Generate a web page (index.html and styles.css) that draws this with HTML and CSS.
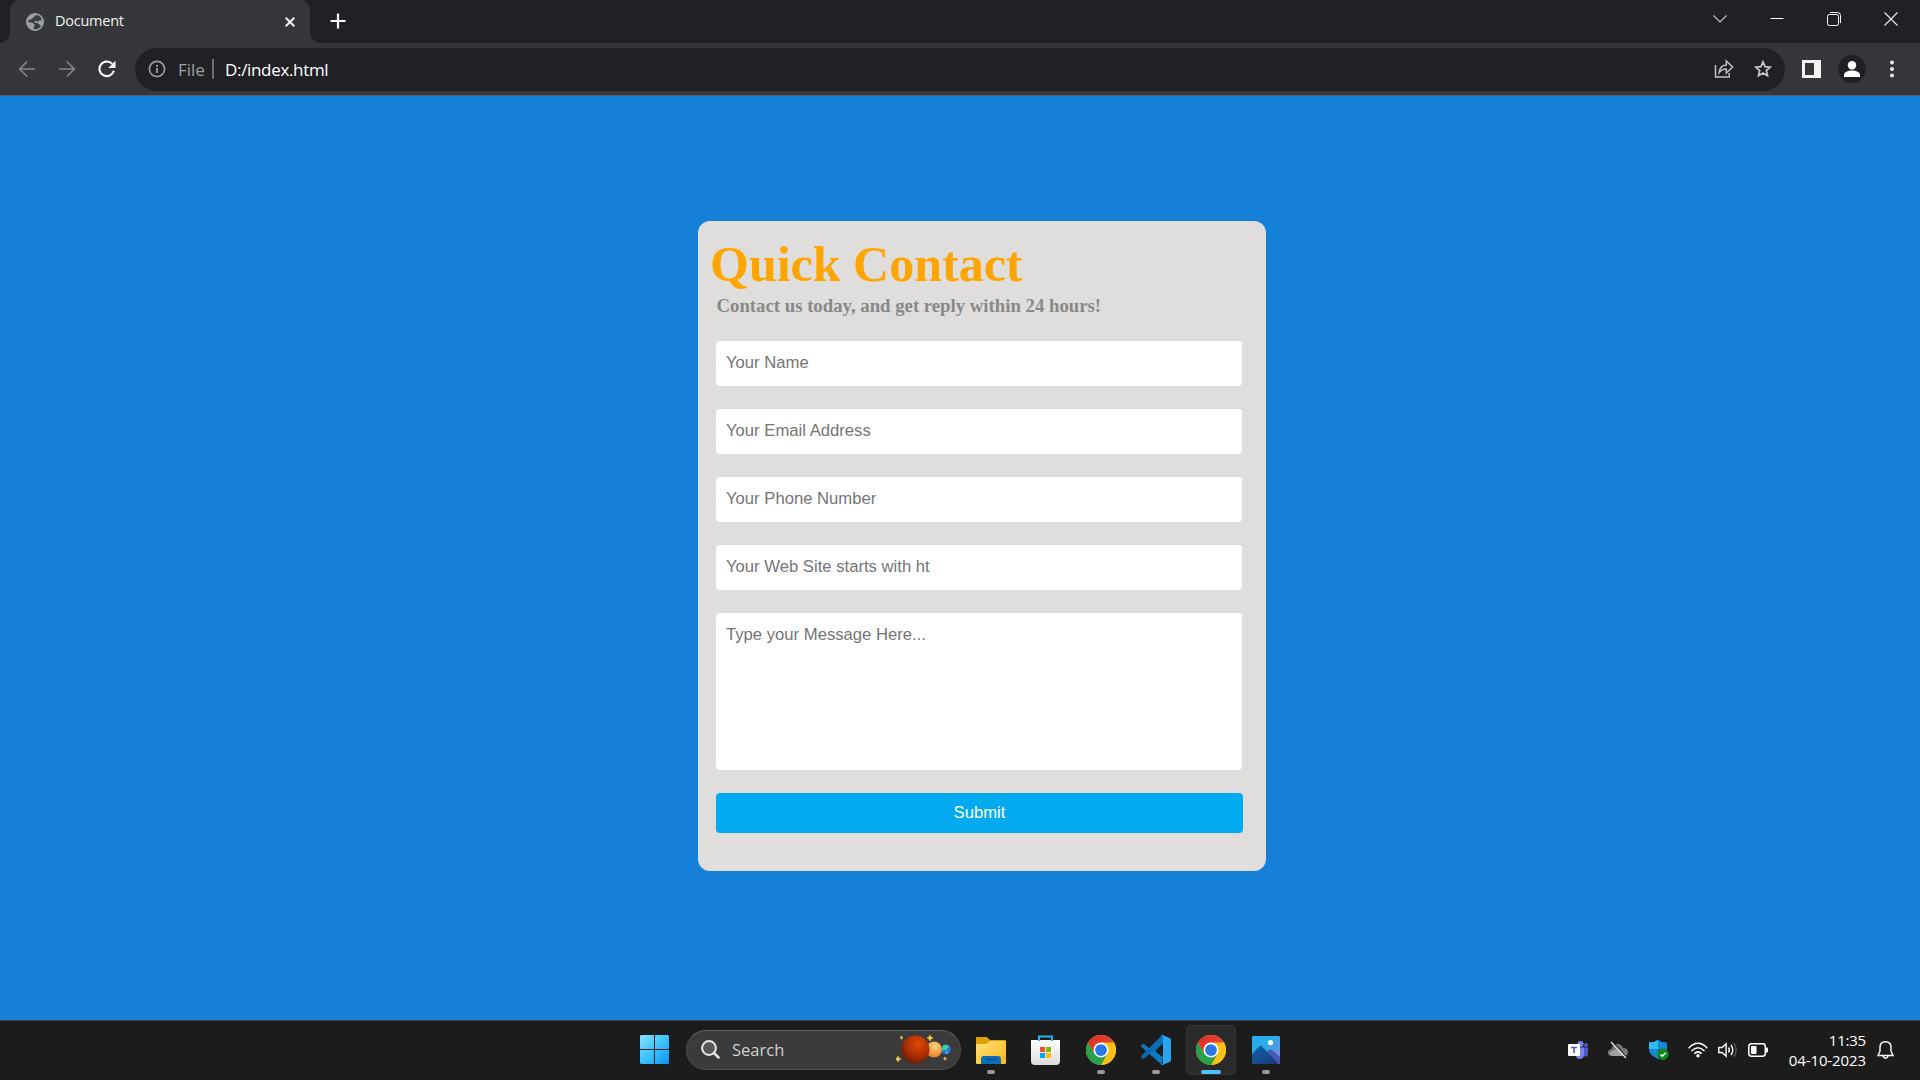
FILE: index.html
```html
<!DOCTYPE html>
<html lang="en">
<head>
<meta charset="utf-8">
<title>Document</title>
<link rel="stylesheet" href="styles.css">
</head>
<body>
<svg class="defs" width="0" height="0" aria-hidden="true">
  <defs>
    <linearGradient id="red" x1="0" y1="0" x2="1" y2="0"><stop offset="0" stop-color="#d93025"/><stop offset="1" stop-color="#ea4335"/></linearGradient>
    <linearGradient id="win" x1="0" y1="0" x2="1" y2="1"><stop offset="0" stop-color="#86e2ff"/><stop offset=".5" stop-color="#3ec3fb"/><stop offset="1" stop-color="#0a93f5"/></linearGradient>
    <linearGradient id="folder" x1="0" y1="0" x2="1" y2="1"><stop offset="0" stop-color="#ffe07c"/><stop offset="1" stop-color="#fbb917"/></linearGradient>
    <linearGradient id="bag" x1="0" y1="0" x2="0" y2="1"><stop offset="0" stop-color="#fff"/><stop offset="1" stop-color="#dcdcdc"/></linearGradient>
    <linearGradient id="photo" x1="0" y1="0" x2="1" y2="1"><stop offset=".4" stop-color="#28aeea"/><stop offset="1" stop-color="#8a7fe0"/></linearGradient>
    <linearGradient id="hill" x1="0" y1="0" x2="1" y2="1"><stop offset="0" stop-color="#1263ac"/><stop offset="1" stop-color="#173a78"/></linearGradient>
    <radialGradient id="mars" cx=".6" cy=".3" r=".75"><stop offset="0" stop-color="#e04a05"/><stop offset=".6" stop-color="#a92d04"/><stop offset="1" stop-color="#691b04"/></radialGradient>
    <radialGradient id="venus" cx=".55" cy=".3" r=".75"><stop offset="0" stop-color="#ffd37c"/><stop offset="1" stop-color="#e87722"/></radialGradient>
    <symbol id="chrome" viewBox="0 0 48 48">
      <circle cx="24" cy="24" r="24" fill="#fbc116"/>
      <path d="M24 24 3.2 12A24 24 0 0 1 44.8 12Z" fill="url(#red)"/>
      <path d="M24 12H44.8A24 24 0 0 1 24 48L34.4 30Z" fill="#fbc116"/>
      <path d="M13.6 30 3.2 12A24 24 0 0 0 24 48L34.4 30 24 24Z" fill="#28a04c"/>
      <path d="M3.2 12 13.6 30 24 24V12Z" fill="url(#red)"/>
      <circle cx="24" cy="24" r="12" fill="#fff"/><circle cx="24" cy="24" r="9.4" fill="#2a78e4"/>
    </symbol>
  </defs>
</svg>

<div class="tabstrip">
  <div class="tab">
    <svg class="globe" width="18" height="18" viewBox="0 0 18 18"><circle cx="9" cy="9" r="9" fill="#9aa0a6"/><path d="M10.5 2c-1.6.2-1.6 1.8-3 2.2-.9.3-.6 1.2-1.2 1.6-.9.5-2.8.3-4.2 2.2-.5.6.8 1.7 2.3 1.5 1.6-.2 2.2 0 2.8 1 .5.8 1.8.6 1.8 1.5 0 1-1.4 1-1.3 2.1 0 .7-.1 1.5.2 2 3 .7 5.600-.6 7-2.900-.8-.8-.9-1.900-2-2-.9-.1-1.200-1.300-2.200-1.500-1.100-.3-2.200.1-2.400-.8-.2-.8 1-1.100 1.700-1.200 1-.1.8 1 1.700 1 .9 0 .8-1.200 1.700-1.300.8-.2 1.300.2 2.200-.1C15.700 4.800 13.600 2.300 10.500 2Z" fill="#3a3b3f"/></svg>
    <span class="tab-title">Document</span>
    <svg width="10" height="10" viewBox="0 0 10 10" fill="none" stroke="#f1f3f4" stroke-width="2"><path d="m.7.7 8.600 8.600M9.300.7.700 9.300"/></svg>
  </div>
  <svg class="new-tab" width="16" height="16" viewBox="0 0 16 16" fill="none" stroke="#fff" stroke-width="2.200"><path d="M8 .5v15M.5 8h15"/></svg>
  <div class="window-buttons">
    <svg width="14" height="14" viewBox="0 0 14 14" fill="none" stroke="#c8c9ca" stroke-width="1.100"><path d="m.5 3.500 6.500 6.500 6.500-6.500"/></svg>
    <svg width="14" height="14" viewBox="0 0 14 14" fill="none" stroke="#fff"><path d="M.5 6.500h13"/></svg>
    <svg width="14" height="14" viewBox="0 0 14 14" fill="none" stroke="#fff"><rect x=".5" y="2.500" width="11" height="11" rx="2"/><path d="M3 .5h7.500a3 3 0 0 1 3 3V11"/></svg>
    <svg width="14" height="14" viewBox="0 0 14 14" fill="none" stroke="#e8e8e8" stroke-width="1.200"><path d="m.5.5 13 13m0-13-13 13"/></svg>
  </div>
</div>

<div class="toolbar">
  <div class="nav">
    <svg width="18" height="18" viewBox="0 0 18 18" fill="none" stroke="#85868a" stroke-width="1.700"><path d="M17 9H2M9.200 1.500 1.700 9l7.500 7.500"/></svg>
    <svg width="18" height="18" viewBox="0 0 18 18" fill="none" stroke="#85868a" stroke-width="1.700"><path d="M1 9h15M8.800 1.500 16.300 9l-7.500 7.500"/></svg>
    <svg width="18" height="18" viewBox="0 0 18 18"><path d="M15.800 10.700A7.300 7.300 0 1 1 14.200 3.900" fill="none" stroke="#fff" stroke-width="2.100"/><path d="M17.500.8V8h-7.200Z" fill="#fff"/></svg>
  </div>
  <div class="omnibox">
    <svg width="18" height="18" viewBox="0 0 18 18"><circle cx="9" cy="9" r="7.600" fill="none" stroke="#9aa0a6" stroke-width="1.600"/><path d="M9 8v5M9 4.800v2" stroke="#9aa0a6" stroke-width="1.800"/></svg>
    <span class="scheme">File</span>
    <span class="divider"></span>
    <span class="url">D:/index.html</span>
    <svg class="share" width="20" height="20" viewBox="0 0 20 20" fill="none" stroke="#bdc1c6" stroke-width="1.500"><path d="M1.500 6v12h13.700v-4M5.200 13.500C5.600 9 8 6.300 12.300 6V2l6.300 6-6.300 6v-4c-3.300 0-5.300 1-7.100 3.500Z"/></svg>
    <svg width="18" height="18" viewBox="0 0 18 18" fill="none" stroke="#c4c7ca" stroke-width="1.700"><path d="m9 1.800 2.050 4.850 5.250.45-4 3.450 1.200 5.100L9 12.950 4.500 15.650l1.200-5.100-4-3.450 5.250-.45Z"/></svg>
  </div>
  <div class="tools">
    <svg width="19" height="18" viewBox="0 0 19 18"><path d="M0 0h19v18H0Z" fill="#f1f3f4"/><path d="M3 3h9v12H3Z" fill="#35363a"/></svg>
    <svg class="avatar" width="28" height="28" viewBox="0 0 28 28"><circle cx="14" cy="14" r="14" fill="#202124"/><circle cx="14" cy="10.200" r="4.200" fill="#fff"/><path d="M6 22v-2c0-6 16-6 16 0v2Z" fill="#fff"/></svg>
    <svg width="4" height="18" viewBox="0 0 4 18" fill="#e8eaed"><circle cx="2" cy="2.500" r="2"/><circle cx="2" cy="9" r="2"/><circle cx="2" cy="15.500" r="2"/></svg>
  </div>
</div>

<main class="page">
  <form class="card">
    <h1>Quick Contact</h1>
    <h3>Contact us today, and get reply within 24 hours!</h3>
    <div class="field"><span>Your Name</span></div>
    <div class="field"><span>Your Email Address</span></div>
    <div class="field"><span>Your Phone Number</span></div>
    <div class="field"><span>Your Web Site starts with ht</span></div>
    <div class="field message"><span>Type your Message Here...</span></div>
    <button class="submit" type="button">Submit</button>
  </form>
</main>

<footer class="taskbar">
  <div class="apps">
    <div class="app start"><svg width="29" height="29" viewBox="0 0 29 29"><path d="M1 0h13v14H0V1ZM15 0h13l1 1v13H15ZM0 15h14v14H1l-1-1ZM15 15h14v13l-1 1H15Z" fill="url(#win)"/></svg></div>
    <div class="search">
      <svg width="19" height="19" viewBox="0 0 19 19" fill="none" stroke="#e4e6e8" stroke-width="2"><circle cx="8" cy="8" r="6.900" fill="#55585b"/><path d="m13 13 4.500 4.500" stroke-width="2.500" stroke-linecap="round"/></svg>
      <span>Search</span>
      <svg class="planets" width="56" height="30" viewBox="0 0 56 30">
        <circle cx="50" cy="14.500" r="5" fill="#2475d0"/><path d="M47 10.500c2-1.500 5-.5 6 1l-2 3-4 1-1-2Z" fill="#45cfa0"/><path d="m49 17 3-1-1 3Z" fill="#45cfa0"/>
        <circle cx="38" cy="14.500" r="8" fill="url(#venus)"/><circle cx="19.500" cy="14.500" r="14" fill="url(#mars)"/>
        <path d="m34 0 1 2 2 1-2 1-1 2-1-2-2-1 2-1ZM2 21l1 2 2 1-2 1-1 2-1-2-2-1 2-1ZM5.500 1l.5 1 1 .5-1 .5-.5 1.500L5 3l-1-.5L5 2ZM49 22l.5 1 1 .5-1 .5-.5 1.500-.5-1.500-1-.5 1-.5Z" fill="#f4cf4b" stroke="#f4cf4b" stroke-width=".5"/>
      </svg>
    </div>
    <div class="app running"><svg width="30" height="28" viewBox="0 0 30 28"><path d="M0 7V2Q0 1 1 1h9q1 0 2 1l2 2h15q1 0 1 1v6H0Z" fill="#dca009"/><path d="M0 9q0-1 1-1h9l4-3h15q1 0 1 1v21q0 1-1 1H1q-1 0-1-1Z" fill="url(#folder)"/><path d="M5 28v-5q0-3 3-3h14q3 0 3 3v5Z" fill="#0a6fb8"/><path d="M8.500 23.500h13" stroke="#064f86" stroke-width="1.300"/></svg></div>
    <div class="app store"><svg width="29" height="30" viewBox="0 0 29 30"><path d="M0 5h29v21q0 4-4 4H4q-4 0-4-4Z" fill="url(#bag)"/><path d="M8 6V1.500h13V6" fill="none" stroke="#24b4ee" stroke-width="2"/><path d="M9 12h5v5H9Z" fill="#f25022"/><path d="M15 12h5v5h-5Z" fill="#7fba00"/><path d="M9 18h5v5H9Z" fill="#00a4ef"/><path d="M15 18h5v5h-5Z" fill="#ffb900"/></svg></div>
    <div class="app running"><svg width="30" height="30"><use href="#chrome"/></svg></div>
    <div class="app running"><svg width="30" height="30" viewBox="0 0 30 30"><path d="M22 0 8.500 13.500 3 9.200Q2 8.500 1 9.300L.4 10q-.8.900 0 1.700L20.500 29.500 22 22.500 14 16 22 8Z" fill="#0b7bc6"/><path d="M22 8 3 23.500q-1 .5-2-.4L.3 22.400q-.6-.9.200-1.700L20.500.5Z" fill="#0a6cb4"/><path d="M21.500.1 29 3.300q1 .5 1 1.500v20.400q0 1-1 1.500l-7.500 3.200q-1.200.3-2-.6 2.500.7 2.500-2V2.700q0-2.700-2.500-2 .8-.9 2-.6Z" fill="#28a5f0"/></svg></div>
    <div class="app running active"><svg width="30" height="30"><use href="#chrome"/></svg></div>
    <div class="app running"><svg width="28" height="28" viewBox="0 0 28 28"><path d="M1 0h26l1 1v26l-1 1H1l-1-1V1Z" fill="url(#photo)"/><path d="m14 17 3-3q1.500-1.500 3 0l8 7v7H14Z" fill="#4a58b5"/><path d="m0 18 7-7.500q1.500-1.300 3 0L26 27l-1 1H1l-1-1Z" fill="url(#hill)"/><circle cx="18.500" cy="6.500" r="2.600" fill="#fff"/></svg></div>
  </div>
  <div class="tray">
    <svg class="teams" width="20" height="18" viewBox="0 0 20 18"><circle cx="12.500" cy="3" r="3" fill="#7b83eb"/><circle cx="18" cy="4" r="2" fill="#5059c9"/><path d="M14 6.500h6v6q0 3-3 3h-3Z" fill="#5059c9"/><path d="M8 6.500h8V13q0 5-4.500 5Q8 18 8 14Z" fill="#7b83eb"/><rect y="3" width="12" height="12" rx="1" fill="#fff"/><path d="M3 6.500h6M6 6.500V12" stroke="#5059c9" stroke-width="1.600"/></svg>
    <svg class="cloud" width="20" height="18" viewBox="0 0 20 18"><path d="M4 15q-4 0-4-3.500Q0 8.500 3.500 8 5 3 9.500 3q4 0 5.500 4 5 0 5 4 0 4-4 4Z" fill="#777"/><path d="m1 12 7-4 11 5-3 2H4Z" fill="#a1a1a1"/><path d="m3.700.3 15 16" stroke="#1c1c1c" stroke-width="1.600"/><path d="m3 1 15 16" stroke="#eee" stroke-width="1.300"/></svg>
    <svg class="shield" width="20" height="20" viewBox="0 0 20 20"><path d="M9 0q4 2.500 9 2.500V9q0 6-9 10Q0 15 0 9V2.500Q5 2.500 9 0Z" fill="#1787d8"/><path d="M9 0v9H0V2.500Q5 2.500 9 0Z" fill="#31bdf2"/><path d="M9 9h9q0 6-9 10Z" fill="#0e61b4"/><circle cx="14" cy="14.300" r="5.700" fill="#0f8a18"/><path d="m11.500 14.500 1.800 1.800 3.500-3.600" fill="none" stroke="#fff" stroke-width="1.400"/></svg>
    <svg class="wifi" width="20" height="16" viewBox="0 0 20 16" fill="none" stroke="#fff" stroke-width="1.500"><path d="M.7 6.200q9.300-9.700 18.600 0M3.500 9q6.500-6.700 13 0M6.300 11.700q3.700-3.600 7.400 0"/><circle cx="10" cy="13.800" r="1.700" fill="#fff" stroke="none"/></svg>
    <svg class="volume" width="20" height="16" viewBox="0 0 20 16" fill="none" stroke="#fff" stroke-width="1.400"><path d="M.8 5.500h3.300l4-3.700v12.400l-4-3.700H.8ZM10.500 5.500q1.700 2.500 0 5M13 3q3.500 5 0 10"/><path d="M15.700 1q5 7 0 14" stroke="#555"/></svg>
    <svg width="20" height="14" viewBox="0 0 20 14"><rect x=".8" y=".8" width="16.500" height="12.400" rx="2.700" fill="none" stroke="#fff" stroke-width="1.500"/><rect x="3" y="3" width="5.500" height="8" rx=".8" fill="#fff"/><path d="M18 4.500h1q1 0 1 1v3q0 1-1 1h-1Z" fill="#fff"/></svg>
    <div class="clock"><span class="time">11:35</span><span class="date">04-10-2023</span></div>
    <svg width="17" height="18" viewBox="0 0 17 18" fill="none" stroke="#fff" stroke-width="1.400"><path d="M8.500.8Q3 .8 3 6.500v3.700L1 14.500h15l-2-4.300V6.500Q14 .8 8.500.8ZM6 15q.6 2.200 2.500 2.200T11 15"/></svg>
  </div>
</footer>
</body>
</html>
```
FILE: styles.css
```css
* { box-sizing: border-box; }

body {
  margin: 0;
  height: 1080px;
  display: flex;
  flex-direction: column;
  overflow: hidden;
  background: #167fd7;
  font-family: "Open Sans", "Noto Sans", sans-serif;
}

svg { display: block; flex: none; }
.defs { position: absolute; }

/* Browser chrome */
.tabstrip {
  flex: none;
  height: 43px;
  display: flex;
  background: #202124;
  padding-left: 10px;
}
.tab {
  position: relative;
  width: 300px;
  display: flex;
  align-items: center;
  padding: 0 15px 0 16px;
  background: #35363a;
  border-radius: 10px 10px 0 0;
}
.tab::before, .tab::after {
  content: "";
  position: absolute;
  bottom: 0;
  width: 10px;
  height: 10px;
}
.tab::before { left: -10px; background: radial-gradient(circle at 0 0, #202124 9.5px, #35363a 10px); }
.tab::after { right: -10px; background: radial-gradient(circle at 100% 0, #202124 9.5px, #35363a 10px); }
.tab-title {
  flex: 1;
  margin: -2px 0 0 11px;
  font-size: 14.5px;
  line-height: 20px;
  letter-spacing: -.25px;
  color: #f1f3f4;
}
.new-tab { margin: 13px 0 0 20px; }
.window-buttons {
  display: flex;
  gap: 43px;
  margin: 12px 22px 0 auto;
}

.toolbar {
  flex: none;
  height: 53px;
  display: flex;
  align-items: center;
  padding: 0 26px 0 18px;
  background: #35363a;
  border-bottom: 1px solid #5b5c60;
}
.nav {
  display: flex;
  gap: 22px;
  width: 117px;
}
.omnibox {
  display: flex;
  align-items: center;
  width: 1650px;
  height: 43px;
  border-radius: 22px;
  background: #202124;
  padding: 0 13px;
  font-size: 17px;
}
.scheme { margin-left: 12px; width: 34px; color: #9aa0a6; }
.divider { width: 2px; height: 20px; background: #6b6e72; }
.url { margin-left: 11px; color: #fff; letter-spacing: -.33px; }
.share { margin: 0 20px 0 auto; }
.tools {
  display: flex;
  align-items: center;
  margin-left: auto;
}
.avatar { margin: 0 24px 0 17px; }

/* Contact page */
.page {
  height: 924px;
  padding: 125px 0 0 698px;
}
.card {
  width: 568px;
  height: 650px;
  padding: 15px 18px 0;
  border-radius: 12px;
  background: #dfdedc;
  font-family: "Liberation Serif", serif;
}
h1 {
  margin: 0 0 0 -6px;
  font-size: 50px;
  line-height: 57px;
  color: orange;
}
h3 {
  margin: 0 0 23px .5px;
  font-size: 18.75px;
  line-height: 25px;
  color: #888;
}
.field {
  width: 526px;
  height: 45px;
  margin-bottom: 23px;
  padding: 12px 10px;
  border-radius: 4px;
  background: #fff;
  color: #757575;
  font: 16.667px/20px "Liberation Sans", sans-serif;
}
.field span {
  display: block;
  white-space: nowrap;
}
.message { height: 157px; }
.submit {
  display: block;
  width: 527px;
  height: 40px;
  padding: 0;
  border: 0;
  border-radius: 4px;
  background: #03aaf0;
  color: #fff;
  font: 16.667px/18px "Liberation Sans", sans-serif;
}

/* Taskbar */
.taskbar {
  flex: none;
  height: 60px;
  display: flex;
  align-items: center;
  justify-content: space-between;
  padding: 0 26px 2px 629px;
  border-top: 1px solid #3b3f43;
  background: #1c1c1c;
}
.apps, .tray { display: flex; align-items: center; }
.apps { gap: 5px; }
.app {
  position: relative;
  width: 50px;
  height: 50px;
  display: grid;
  place-items: center;
  border-radius: 5px;
}
.app.running::after {
  content: "";
  position: absolute;
  bottom: 1px;
  left: 21px;
  width: 8px;
  height: 4px;
  border-radius: 2px;
  background: #9a9a9a;
}
.app.active { background: #2a2a2a; box-shadow: inset 0 0 0 1px #353535; }
.app.active::after { left: 15px; width: 20px; background: #4cc2ff; }
.store svg { margin-right: 1px; }
.search {
  width: 275px;
  height: 40px;
  margin: 0 0 0 2px;
  display: flex;
  align-items: center;
  padding: 0 8px 0 14px;
  border: 1px solid #4d4d4d;
  border-top-color: #606060;
  border-radius: 20px;
  background: #3b3b3b;
  color: #d0d0d0;
  font-size: 16.5px;
}
.search span { margin-left: 12px; }
.planets { margin-left: auto; }

.tray { color: #fff; }
.cloud { margin-left: 20px; }
.shield { margin-left: 21px; }
.wifi { margin-left: 19px; }
.volume { margin: 0 10px; }
.clock {
  width: 98px;
  margin-right: 11px;
  display: flex;
  flex-direction: column;
  align-items: flex-end;
  font-size: 15px;
  line-height: 20px;
}
.time { letter-spacing: -.2px; }
.date { letter-spacing: -.1px; }
```
